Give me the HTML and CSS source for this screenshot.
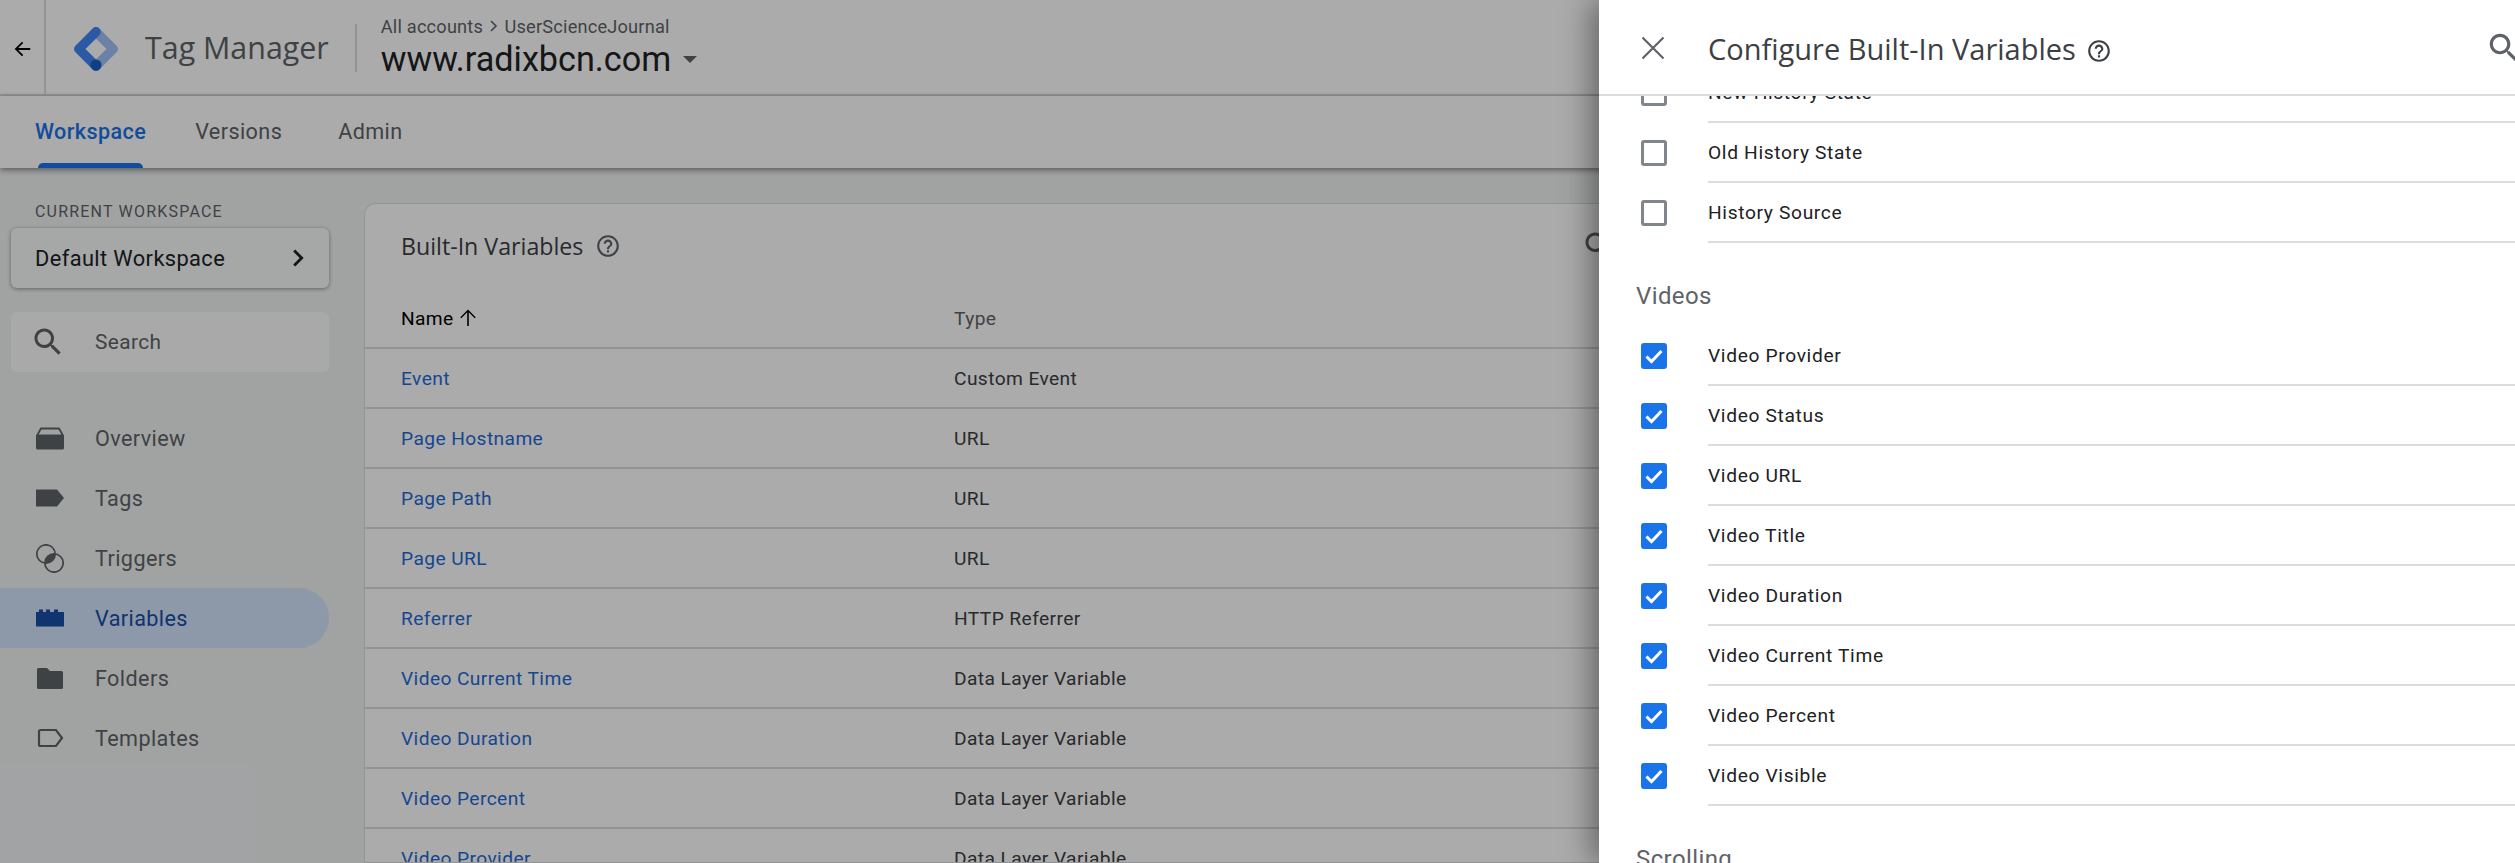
FILE: index.html
```html
<!DOCTYPE html>
<html>
  <head>
    <meta charset="utf-8">
    <title>Tag Manager</title>
    <link rel="stylesheet" href="styles.css">
  </head>
  <body>
    <svg class="defs" width="0" height="0">
      <symbol id="i-help" viewBox="0 0 24 24"><path d="M11 18h2v-2h-2v2zm1-16C6.48 2 2 6.48 2 12s4.48 10 10 10 10-4.48 10-10S17.52 2 12 2zm0 18c-4.41 0-8-3.59-8-8s3.59-8 8-8 8 3.59 8 8-3.59 8-8 8zm0-14c-2.21 0-4 1.79-4 4h2c0-1.1.9-2 2-2s2 .9 2 2c0 2-3 1.75-3 5h2c0-2.25 3-2.5 3-5 0-2.21-1.79-4-4-4z"/></symbol>
      <symbol id="i-search" viewBox="0 0 24 24"><path d="M15.5 14h-.79l-.28-.27C15.41 12.59 16 11.11 16 9.5 16 5.91 13.09 3 9.5 3S3 5.91 3 9.5 5.91 16 9.5 16c1.61 0 3.09-.59 4.23-1.57l.27.28v.79l5 4.99L20.49 19l-4.99-5zm-6 0C7.01 14 5 11.99 5 9.5S7.01 5 9.5 5 14 7.01 14 9.5 11.99 14 9.5 14z"/></symbol>
      <symbol id="i-check" viewBox="0 0 26 26"><path d="M5.500 13.500l5 5 10-10.500" fill="none" stroke="#fff" stroke-width="3"/></symbol>
    </svg>

    <div class="page">
      <header class="topbar">
        <div class="back">
          <svg width="22" height="22" viewBox="0 0 24 24"><path d="M21 11H7.800l5.600-5.600L12 4l-8 8 8 8 1.400-1.400L7.800 13H21z"/></svg>
        </div>
        <svg class="logo" width="44" height="44" viewBox="0 0 44 44">
          <path d="M22 4.800L39.200 22 22 39.200" fill="none" stroke="#a0c0f8" stroke-width="9.500" stroke-linecap="round" stroke-linejoin="round"/>
          <path d="M22 4.800L4.800 22 22 39.200" fill="none" stroke="#4285f4" stroke-width="9.500" stroke-linecap="round" stroke-linejoin="round"/>
          <circle cx="22" cy="38" r="5.500" fill="#1a5fc8"/>
        </svg>
        <span class="product">Tag Manager</span>
        <div class="account">
          <div class="crumbs">All accounts <svg width="12" height="14" viewBox="0 0 12 14"><path d="M3 2l5 5-5 5" fill="none" stroke="#5f6368" stroke-width="1.600"/></svg> UserScienceJournal</div>
          <div class="container-name">www.radixbcn.com <span class="caret"></span></div>
        </div>
      </header>

      <nav class="tabs">
        <a class="tab active">Workspace</a>
        <a class="tab tab-versions">Versions</a>
        <a class="tab">Admin</a>
      </nav>

      <div class="main">
        <aside class="sidebar">
          <div class="ws-label">CURRENT WORKSPACE</div>
          <div class="ws-card">
            <span>Default Workspace</span>
            <svg width="34" height="34" viewBox="0 0 24 24"><path d="M10 6L8.590 7.410 13.170 12l-4.580 4.590L10 18l6-6z"/></svg>
          </div>
          <div class="search-box">
            <svg width="36" height="36" viewBox="0 0 24 24"><use href="#i-search"/></svg>
            <span>Search</span>
          </div>
          <ul class="nav">
            <li>
              <svg width="28" height="28" viewBox="0 0 28 28"><path d="M5 4.500h18l4 7H1z" fill="none" stroke="currentColor" stroke-width="1.800"/><path d="M0 11h28v13a1.500 1.500 0 0 1-1.500 1.500h-25A1.500 1.500 0 0 1 0 24z"/></svg>
              Overview
            </li>
            <li>
              <svg width="28" height="28" viewBox="0 0 28 28"><path d="M0 5.500h21l7 8.500-7 8.500H0z"/></svg>
              Tags
            </li>
            <li>
              <svg width="28" height="29" viewBox="0 0 28 29"><defs><clipPath id="lens"><circle cx="10" cy="10" r="9.200"/></clipPath></defs><circle cx="18" cy="19" r="9.200" clip-path="url(#lens)"/><circle cx="10" cy="10" r="9.200" fill="none" stroke="currentColor" stroke-width="1.700"/><circle cx="18" cy="19" r="9.200" fill="none" stroke="currentColor" stroke-width="1.700"/></svg>
              Triggers
            </li>
            <li class="active">
              <svg width="28" height="28" viewBox="0 0 28 28"><path d="M0 8h3V5.500h4V8h3V5.500h4V8h4V5.500h4V8h6v14.500H0z"/></svg>
              Variables
            </li>
            <li>
              <svg width="28" height="28" viewBox="0 0 28 28"><path d="M1 5.500a1.500 1.500 0 0 1 1.500-1.500H11l3 3h11.500A1.500 1.500 0 0 1 27 8.500v15a1.500 1.500 0 0 1-1.500 1.500h-23A1.500 1.500 0 0 1 1 23.500z"/></svg>
              Folders
            </li>
            <li>
              <svg width="28" height="28" viewBox="0 0 28 28"><path d="M4.500 6h15.500l6 8-6 8H4.500A1.500 1.500 0 0 1 3 20.500v-13A1.500 1.500 0 0 1 4.500 6z" fill="none" stroke="currentColor" stroke-width="2.200"/></svg>
              Templates
            </li>
          </ul>
        </aside>

        <section class="card">
          <div class="card-head">
            <h2>Built-In Variables</h2>
            <svg class="help" width="26" height="26" viewBox="0 0 24 24"><use href="#i-help"/></svg>
            <svg class="card-search" width="36" height="36" viewBox="0 0 24 24"><use href="#i-search"/></svg>
          </div>
          <div class="row row-head">
            <div class="name-head">Name
              <svg width="24" height="24" viewBox="0 0 24 24"><path d="M4.300 11.200l1 1 5.900-5.900V20h1.600V6.300l5.900 5.900 1-1L12 3.500z"/></svg>
            </div>
            <div>Type</div>
          </div>
          <div class="row"><a>Event</a><div>Custom Event</div></div>
          <div class="row"><a>Page Hostname</a><div>URL</div></div>
          <div class="row"><a>Page Path</a><div>URL</div></div>
          <div class="row"><a>Page URL</a><div>URL</div></div>
          <div class="row"><a>Referrer</a><div>HTTP Referrer</div></div>
          <div class="row"><a>Video Current Time</a><div>Data Layer Variable</div></div>
          <div class="row"><a>Video Duration</a><div>Data Layer Variable</div></div>
          <div class="row"><a>Video Percent</a><div>Data Layer Variable</div></div>
          <div class="row"><a>Video Provider</a><div>Data Layer Variable</div></div>
        </section>
      </div>

      <div class="scrim"></div>

      <div class="panel">
        <div class="panel-head">
          <svg class="close" width="24" height="24" viewBox="0 0 24 24"><path d="M1.500 1.500l21 21M22.500 1.500l-21 21" fill="none" stroke="currentColor" stroke-width="2.200"/></svg>
          <h1>Configure Built-In Variables</h1>
          <svg class="help" width="26" height="26" viewBox="0 0 24 24"><use href="#i-help"/></svg>
          <svg class="panel-search" width="38" height="38" viewBox="0 0 24 24"><use href="#i-search"/></svg>
        </div>
        <div class="panel-body">
          <div class="list">
            <label class="item"><span class="box"></span><span class="item-label">New History State</span></label>
            <label class="item"><span class="box"></span><span class="item-label">Old History State</span></label>
            <label class="item"><span class="box"></span><span class="item-label">History Source</span></label>

            <h3>Videos</h3>
            <label class="item"><span class="box on"><svg width="26" height="26"><use href="#i-check"/></svg></span><span class="item-label">Video Provider</span></label>
            <label class="item"><span class="box on"><svg width="26" height="26"><use href="#i-check"/></svg></span><span class="item-label">Video Status</span></label>
            <label class="item"><span class="box on"><svg width="26" height="26"><use href="#i-check"/></svg></span><span class="item-label">Video URL</span></label>
            <label class="item"><span class="box on"><svg width="26" height="26"><use href="#i-check"/></svg></span><span class="item-label">Video Title</span></label>
            <label class="item"><span class="box on"><svg width="26" height="26"><use href="#i-check"/></svg></span><span class="item-label">Video Duration</span></label>
            <label class="item"><span class="box on"><svg width="26" height="26"><use href="#i-check"/></svg></span><span class="item-label">Video Current Time</span></label>
            <label class="item"><span class="box on"><svg width="26" height="26"><use href="#i-check"/></svg></span><span class="item-label">Video Percent</span></label>
            <label class="item"><span class="box on"><svg width="26" height="26"><use href="#i-check"/></svg></span><span class="item-label">Video Visible</span></label>

            <h3>Scrolling</h3>
          </div>
        </div>
      </div>
    </div>
  </body>
</html>
```

FILE: styles.css
```css
html, body {
  margin: 0;
  height: 100%;
}
body {
  font-family: Roboto, sans-serif;
  font-size: 19.2px;
  letter-spacing: .4px;
  color: #3c4043;
  overflow: hidden;
}
.defs {
  display: block;
  height: 0;
}
h1, h2, h3, ul {
  margin: 0;
  padding: 0;
  font-weight: 400;
}
svg {
  fill: currentColor;
  flex: none;
}
.page {
  position: relative;
  height: 863px;
  overflow: hidden;
  background: #fff;
  display: flex;
  flex-direction: column;
}

/* top bar */
.topbar {
  height: 96px;
  box-sizing: border-box;
  border-bottom: 2px solid #dadce0;
  display: flex;
  align-items: center;
  flex: none;
}
.back {
  width: 46px;
  height: 94px;
  padding-top: 4px;
  box-sizing: border-box;
  border-right: 2px solid #dadce0;
  display: flex;
  align-items: center;
  justify-content: center;
  color: #000;
}
.logo {
  margin: 3px 0 0 28px;
}
.product {
  margin: 2px 0 0 27px;
  font-family: "Open Sans", sans-serif;
  font-size: 30.4px;
  letter-spacing: 0;
  color: #5f6368;
  padding-right: 26px;
  border-right: 2px solid #dadce0;
  line-height: 48px;
}
.account {
  margin: 1px 0 0 24px;
}
.crumbs {
  font-size: 18.2px;
  letter-spacing: .2px;
  color: #5f6368;
  line-height: 24px;
}
.container-name {
  font-size: 34.2px;
  letter-spacing: 0;
  color: #202124;
  line-height: 41px;
  display: flex;
  align-items: center;
  gap: 3px;
  white-space: pre;
}
.caret {
  width: 0;
  height: 0;
  border: 7px solid transparent;
  border-top: 7px solid #5f6368;
  border-bottom: 0;
}

/* tabs */
.tabs {
  height: 72px;
  flex: none;
  display: flex;
  padding-left: 35px;
  box-shadow: 0 2px 6px rgba(0, 0, 0, .45);
  position: relative;
  z-index: 1;
  background: #fff;
  box-sizing: border-box;
}
.tab {
  position: relative;
  line-height: 72px;
  margin-right: 56px;
  font-size: 21.6px;
  color: #5f6368;
}
.tab-versions {
  margin-left: -7px;
}
.tab.active {
  color: #1a73e8;
  font-weight: 500;
}
.tab.active::after {
  content: "";
  position: absolute;
  left: 3px;
  right: 3px;
  bottom: 0;
  height: 5px;
  background: #1a73e8;
  border-radius: 5px 5px 0 0;
}

/* sidebar */
.main {
  flex: 1;
  display: flex;
  background: #f1f3f4;
  min-height: 0;
}
.sidebar {
  width: 364px;
  flex: none;
  box-sizing: border-box;
  padding-top: 34px;
}
.ws-label {
  margin-left: 35px;
  font-size: 16px;
  line-height: 20px;
  letter-spacing: 1.2px;
  color: #5f6368;
}
.ws-card {
  margin: 6px 35px 0 11px;
  height: 60px;
  padding: 0 14px 0 24px;
  display: flex;
  align-items: center;
  justify-content: space-between;
  background: #f8f9fa;
  border-radius: 6px;
  box-shadow: 0 1px 4px rgba(0, 0, 0, .4);
  color: #202124;
  font-size: 21.8px;
}
.search-box {
  margin: 24px 35px 0 11px;
  height: 60px;
  display: flex;
  align-items: center;
  padding-left: 19px;
  gap: 29px;
  background: #fcfcfc;
  border-radius: 6px;
  color: #5f6368;
  font-size: 20.8px;
}
.nav {
  list-style: none;
  margin-top: 36px;
  margin-right: 35px;
}
.nav li {
  height: 60px;
  display: flex;
  align-items: center;
  padding-left: 36px;
  gap: 31px;
  font-size: 21.6px;
  color: #5f6368;
}
.nav li.active {
  background: #d2e3fc;
  color: #174ea6;
  border-radius: 0 30px 30px 0;
}

/* card with the table */
.card {
  flex: 1;
  margin-top: 35px;
  background: #fff;
  border: 1px solid #dadce0;
  border-radius: 12px 0 0 0;
  overflow: hidden;
}
.card-head {
  height: 85px;
  box-sizing: border-box;
  padding: 0 0 2px 36px;
  display: flex;
  align-items: center;
  gap: 12px;
}
.card-head h2 {
  font-family: "Open Sans", sans-serif;
  font-size: 23.2px;
  letter-spacing: 0;
  color: #3c4043;
}
.card-head .help {
  color: #5f6368;
}
.card-search {
  margin-left: 948px;
  color: #5f6368;
}
.row {
  display: grid;
  grid-template-columns: 553px 1fr;
  align-items: center;
  height: 60px;
  box-sizing: border-box;
  padding-left: 36px;
  border-bottom: 2px solid #dadce0;
}
.row a {
  color: #1f6bd6;
}
.row-head {
  color: #5f6368;
}
.name-head {
  display: flex;
  align-items: center;
  gap: 2px;
  color: #000;
  letter-spacing: .35px;
}

/* dimmed page behind the slide-in panel */
.scrim {
  position: absolute;
  top: 0;
  left: 0;
  right: 0;
  bottom: 0;
  z-index: 2;
  background: rgba(0, 0, 0, .33);
}
.panel {
  position: absolute;
  top: 0;
  left: 1599px;
  right: 0;
  bottom: 0;
  z-index: 3;
  background: #fff;
  box-shadow: -8px 0 28px rgba(0, 0, 0, .4);
  display: flex;
  flex-direction: column;
}
.panel-head {
  height: 96px;
  padding-top: 2px;
  flex: none;
  box-sizing: border-box;
  border-bottom: 2px solid #dadce0;
  display: flex;
  align-items: center;
  position: relative;
  z-index: 1;
  background: #fff;
}
.close {
  margin-left: 42px;
  color: #5f6368;
}
.panel-head h1 {
  margin-left: 43px;
  font-family: "Open Sans", sans-serif;
  font-size: 29px;
  letter-spacing: 0;
  color: #3c4043;
}
.panel-head .help {
  margin-left: 10px;
  margin-top: 6px;
  color: #3c4043;
}
.panel-search {
  margin-left: auto;
  margin-right: -8px;
  color: #5f6368;
}
.panel-body {
  flex: 1;
  overflow: hidden;
}
.list {
  margin-top: -33px;
}
.list h3 {
  font-size: 24px;
  line-height: 30px;
  padding: 38px 0 15px 37px;
  color: #5f6368;
}
.item {
  display: flex;
  align-items: center;
  height: 60px;
  padding-left: 42px;
}
.box {
  width: 26px;
  height: 26px;
  box-sizing: border-box;
  border: 3px solid #80868b;
  border-radius: 3px;
  flex: none;
}
.box.on {
  border: 0;
  background: #1a73e8;
}
.box.on svg {
  display: block;
}
.item-label {
  margin-left: 41px;
  flex: 1;
  height: 60px;
  line-height: 60px;
  letter-spacing: .65px;
  box-sizing: border-box;
  border-bottom: 2px solid #dadce0;
  color: #202124;
}
```
